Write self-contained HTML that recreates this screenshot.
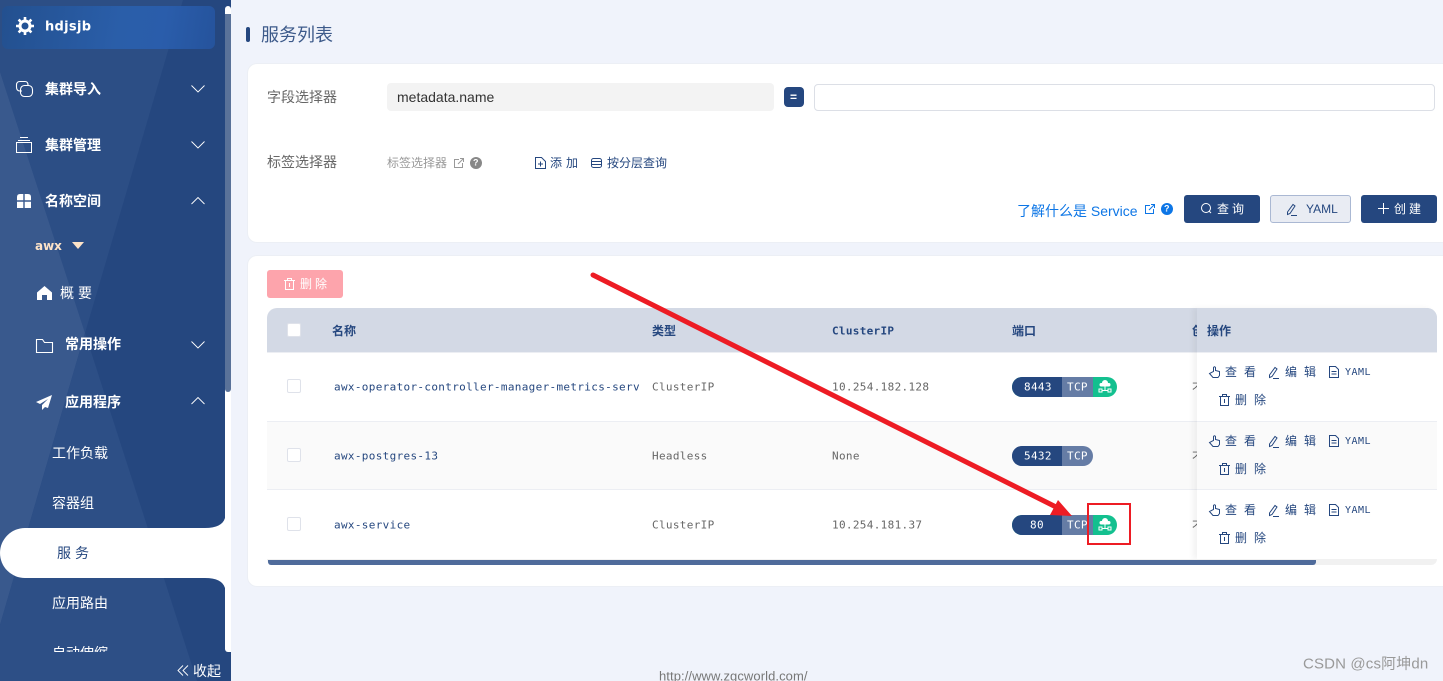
<!DOCTYPE html>
<html lang="zh"><head><meta charset="utf-8"><title>服务列表</title>
<style>
*{box-sizing:border-box}
html,body{margin:0;padding:0;width:1443px;height:681px;overflow:hidden;background:#f0f3fb}
body{position:relative;font-family:"Liberation Sans","WenQuanYi Zen Hei","Noto Sans CJK SC",sans-serif}
.a{position:absolute}
.t{position:absolute;white-space:nowrap;line-height:1;transform:translateY(-50%)}
.m{font-weight:bold;font-size:14px;color:#fff}
.s{font-size:14px;color:#fff}
.mono{font-family:"DejaVu Sans Mono","Liberation Mono",monospace;font-size:11px;letter-spacing:.33px}
.act{font-size:12px;color:#25477f;letter-spacing:7px}
.y{font-family:"DejaVu Sans Mono",monospace;font-size:10px;color:#25477f;letter-spacing:.5px}
.th{font-size:12px;font-weight:bold;color:#25477f}
.btn{position:absolute;top:195px;height:28px;border-radius:3px;background:#25477f}
.cb{position:absolute;left:287px;width:14px;height:14px;background:#fff;border:1px solid #dfe2ea;border-radius:2px}
.chev{fill:none;stroke:#fff;stroke-width:.9}
svg{position:absolute;overflow:visible}
</style></head><body>

<!-- sidebar -->
<div class="a" style="left:0;top:0;width:231px;height:681px;background:#25477f;overflow:hidden">
<svg width="231" height="681" style="left:0;top:0">
<polygon points="0,0 183,0 85,333 0,72" fill="#2c4e85"/>
<polygon points="0,72 85,333 0,625" fill="#39598d"/>
<polygon points="85,333 197,681 0,681 0,625" fill="#2d4f86"/>
</svg>
</div>
<div class="a" style="left:225px;top:6px;width:6px;height:646px;background:#fff;border-radius:3px 3px 0 3px"></div>
<div class="a" style="left:225px;top:14px;width:6px;height:378px;background:#5a7299;border-radius:0 0 3px 3px"></div>

<div class="a" style="left:2px;top:6px;width:213px;height:43px;border-radius:6px;background:linear-gradient(100deg,#23508f 0%,#2a5ea9 55%,#2a5dab 75%,#25539c 100%)"></div>
<svg width="18" height="18" viewBox="0 0 18 18" style="left:16px;top:17px"><circle cx="9" cy="9" r="5" fill="none" stroke="#fff" stroke-width="3"/><g stroke="#fff" stroke-width="2.6"><path d="M9 0v3M9 15v3M0 9h3M15 9h3M2.6 2.6l2 2M13.4 13.4l2 2M15.4 2.6l-2 2M4.6 13.4l-2 2"/></g></svg>
<div class="t" style="left:45px;top:27px;font:bold 13px 'DejaVu Sans',sans-serif;color:#fff;letter-spacing:.3px">hdjsjb</div>

<svg width="17" height="16" viewBox="0 0 17 16" style="left:16px;top:81px" fill="none" stroke="#fff" stroke-width="1.1"><path d="M6 10H4Q.5 10 .5 6V4Q.5.5 4 .5h5Q12 .5 12 4"/><rect x="4.500" y="4.500" width="12" height="11" rx="4"/></svg>
<div class="t m" style="left:45px;top:89px">集群导入</div>
<svg width="14" height="8" class="chev" style="left:191px;top:85px"><path d="M.5 .5l6.500 6.500 6.500-6.500"/></svg>

<svg width="16" height="16" viewBox="0 0 16 16" style="left:16px;top:137px" fill="none" stroke="#fff" stroke-width="1" shape-rendering="crispEdges"><path d="M4 .5h8M2 3.500h12"/><rect x=".5" y="5.500" width="15" height="10"/></svg>
<div class="t m" style="left:45px;top:145px">集群管理</div>
<svg width="14" height="8" class="chev" style="left:191px;top:141px"><path d="M.5 .5l6.500 6.500 6.500-6.500"/></svg>

<svg width="14" height="14" viewBox="0 0 14 14" style="left:17px;top:194px" fill="#fff"><path d="M0 3Q0 0 3 0h3.300v6.300H0zM7.700 0H11q3 0 3 3v3.300H7.700zM0 7.700h6.300V14H0zM7.700 7.700H14V14H7.700z"/></svg>
<div class="t m" style="left:45px;top:201px">名称空间</div>
<svg width="14" height="8" class="chev" style="left:191px;top:197px"><path d="M.5 7l6.500-6.500 6.500 6.500"/></svg>

<div class="t" style="left:35px;top:246px;font:bold 12px 'DejaVu Sans',sans-serif;color:#fde3c8">awx</div>
<svg width="12" height="7" style="left:72px;top:242px"><path d="M0 0h12L6 7z" fill="#fde3c8"/></svg>

<svg width="15" height="14" viewBox="0 0 15 14" style="left:37px;top:286px"><path d="M7.500 0L15 6.500V14H10V9H5V14H0V6.500z" fill="#fff"/></svg>
<div class="t s" style="left:60px;top:293px;letter-spacing:4px">概要</div>

<svg width="17" height="14" viewBox="0 0 17 14" style="left:36px;top:339px" fill="none" stroke="#fff" stroke-width="1.1"><path d="M.5 13.500V.5h6l2 3h8v10z"/></svg>
<div class="t m" style="left:65px;top:344px">常用操作</div>
<svg width="14" height="8" class="chev" style="left:191px;top:341px"><path d="M.5 .5l6.500 6.500 6.500-6.500"/></svg>

<svg width="16" height="15" viewBox="0 0 16 15" style="left:36px;top:395px"><path d="M16 0L0 7l4 2 8-5-6 6v5l3-3 3 1z" fill="#fff"/></svg>
<div class="t m" style="left:65px;top:402px">应用程序</div>
<svg width="14" height="8" class="chev" style="left:191px;top:397px"><path d="M.5 7l6.500-6.500 6.500 6.500"/></svg>

<div class="t s" style="left:52px;top:453px">工作负载</div>
<div class="t s" style="left:52px;top:503px">容器组</div>

<div class="a" style="left:0;top:528px;width:225px;height:50px;background:#fff;border-radius:25px 0 0 25px"></div>
<svg width="20" height="10" style="left:205px;top:518px"><path d="M20 0V10H0Q17 10 20 0z" fill="#fff"/></svg>
<svg width="20" height="10" style="left:205px;top:578px"><path d="M20 10V0H0Q17 0 20 10z" fill="#fff"/></svg>
<div class="t" style="left:57px;top:553px;font-size:14px;color:#25477f;letter-spacing:4px">服务</div>
<div class="t s" style="left:52px;top:603px">应用路由</div>
<div class="a" style="left:52px;top:646px;height:6px;overflow:hidden;font-size:14px;line-height:14px;color:#fff;white-space:nowrap">自动伸缩</div>
<svg width="12" height="11" style="left:177px;top:665px" fill="none" stroke="#fff" stroke-width=".9"><path d="M6 .5L1 5.500l5 5M11 .5L6 5.500l5 5"/></svg>
<div class="t" style="left:193px;top:671px;font-size:14px;color:#fff">收起</div>

<!-- title -->
<div class="a" style="left:246px;top:27px;width:4px;height:15px;background:#25477f;border-radius:2px"></div>
<div class="t" style="left:261px;top:35px;font-size:18px;color:#3d5a8a">服务列表</div>

<!-- filter card -->
<div class="a" style="left:247px;top:63px;width:1196px;height:180px;background:#fff;border-radius:10px 0 0 10px;border:1px solid #eceff5;border-right:0"></div>
<div class="t" style="left:267px;top:97px;font-size:14px;color:#666">字段选择器</div>
<div class="a" style="left:387px;top:83px;width:387px;height:28px;background:#f3f3f3;border-radius:4px"></div>
<div class="t" style="left:397px;top:97px;font-size:14px;color:#333">metadata.name</div>
<div class="a" style="left:784px;top:87px;width:20px;height:20px;background:#25477f;border-radius:4px"></div>
<div class="t" style="left:790px;top:97px;font-size:12px;font-weight:bold;color:#fff">=</div>
<div class="a" style="left:814px;top:84px;width:621px;height:27px;background:#fff;border:1px solid #dcdfe6;border-radius:4px"></div>

<div class="t" style="left:267px;top:162px;font-size:14px;color:#666">标签选择器</div>
<div class="t" style="left:387px;top:163px;font-size:12px;color:#999">标签选择器</div>
<svg width="10" height="10" viewBox="0 0 10 10" style="left:454px;top:158px" fill="none" stroke="#999"><path d="M5 1.500H.5v8h8V5M4 6l5-5M6 .5h3.500V4"/></svg>
<div class="a" style="left:470px;top:157px;width:12px;height:12px;border-radius:50%;background:#888"></div>
<div class="t" style="left:473px;top:163px;font-size:9px;font-weight:bold;color:#fff">?</div>
<svg width="11" height="12" viewBox="0 0 11 12" style="left:535px;top:157px" fill="none" stroke="#25477f"><path d="M.5 .5h6l4 4v7H.5zM3 7h5M5.500 4.500v5"/></svg>
<div class="t" style="left:550px;top:163px;font-size:12px;color:#25477f;letter-spacing:4px">添加</div>
<svg width="11" height="10" viewBox="0 0 11 10" style="left:591px;top:158px" fill="none" stroke="#25477f"><rect x=".5" y=".5" width="10" height="9" rx="2"/><path d="M.5 3.500h10M.5 6.500h10"/></svg>
<div class="t" style="left:607px;top:163px;font-size:12px;color:#25477f">按分层查询</div>

<div class="t" style="left:1017px;top:211px;font-size:14px;color:#0d76e6">了解什么是 Service</div>
<svg width="10" height="10" viewBox="0 0 10 10" style="left:1145px;top:204px" fill="none" stroke="#0d76e6"><path d="M5 1.500H.5v8h8V5M4 6l5-5M6 .5h3.500V4"/></svg>
<div class="a" style="left:1161px;top:203px;width:12px;height:12px;border-radius:50%;background:#0d76e6"></div>
<div class="t" style="left:1164px;top:209px;font-size:9px;font-weight:bold;color:#fff">?</div>

<div class="btn" style="left:1184px;width:76px"></div>
<svg width="11" height="11" style="left:1201px;top:203px" fill="none" stroke="#fff"><circle cx="5" cy="5" r="4.500"/><path d="M8 8l2 2"/></svg>
<div class="t" style="left:1217px;top:209px;font-size:12px;color:#fff;letter-spacing:3px">查询</div>
<div class="btn" style="left:1270px;width:81px;background:#e9ecf3;border:1px solid #aab8d3"></div>
<svg width="12" height="13" viewBox="0 0 12 13" style="left:1286px;top:203px" fill="none" stroke="#25477f"><path d="M1.500 9L7 1.500l2 1.500-5 7.500-2.500 1zM5 12.500h6"/></svg>
<div class="t" style="left:1306px;top:209px;font-size:12px;color:#25477f">YAML</div>
<div class="btn" style="left:1361px;width:76px"></div>
<svg width="11" height="11" style="left:1378px;top:203px" stroke="#fff"><path d="M5.500 0v11M0 5.500h11"/></svg>
<div class="t" style="left:1394px;top:209px;font-size:12px;color:#fff;letter-spacing:3px">创建</div>

<!-- table card -->
<div class="a" style="left:247px;top:255px;width:1196px;height:332px;background:#fff;border-radius:10px 0 0 10px;border:1px solid #eceff5;border-right:0"></div>
<div class="a" style="left:267px;top:270px;width:76px;height:28px;background:#fda4ac;border-radius:3px"></div>
<svg width="11" height="12" viewBox="0 0 11 12" style="left:284px;top:278px" fill="none" stroke="#fff"><path d="M0 2.500h11M3.500 2.500V.5h4v2M1.500 2.500v9h8v-9M5.500 5v4"/></svg>
<div class="t" style="left:300px;top:284px;font-size:12px;color:#fff;letter-spacing:3px">删除</div>

<div class="a" style="left:267px;top:308px;width:1170px;height:44px;background:#d3d9e5;border-radius:10px 10px 0 0"></div>
<div class="a" style="left:267px;top:352px;width:1170px;height:1px;background:#eceef3"></div>
<div class="a" style="left:267px;top:421px;width:1170px;height:69px;background:#fafafa;border-top:1px solid #eceef3;border-bottom:1px solid #eceef3"></div>
<div class="cb" style="top:323px"></div>
<div class="cb" style="top:379px"></div>
<div class="cb" style="top:448px"></div>
<div class="cb" style="top:517px"></div>

<div class="t th" style="left:332px;top:331px">名称</div>
<div class="t th" style="left:652px;top:331px">类型</div>
<div class="t" style="left:832px;top:331px;font:bold 11px 'DejaVu Sans Mono',monospace;color:#25477f;letter-spacing:.3px">ClusterIP</div>
<div class="t th" style="left:1012px;top:331px">端口</div>
<div class="t th" style="left:1192px;top:331px">创</div>

<div class="t mono" style="left:334px;top:387px;color:#25477f">awx-operator-controller-manager-metrics-serv</div>
<div class="t mono" style="left:334px;top:456px;color:#25477f">awx-postgres-13</div>
<div class="t mono" style="left:334px;top:525px;color:#25477f">awx-service</div>
<div class="t mono" style="left:652px;top:387px;color:#666">ClusterIP</div>
<div class="t mono" style="left:652px;top:456px;color:#666">Headless</div>
<div class="t mono" style="left:652px;top:525px;color:#666">ClusterIP</div>
<div class="t mono" style="left:832px;top:387px;color:#666">10.254.182.128</div>
<div class="t mono" style="left:832px;top:456px;color:#666">None</div>
<div class="t mono" style="left:832px;top:525px;color:#666">10.254.181.37</div>
<div class="t" style="left:1192px;top:388px;font-size:12px;color:#666">不</div>
<div class="t" style="left:1192px;top:457px;font-size:12px;color:#666">不</div>
<div class="t" style="left:1192px;top:526px;font-size:12px;color:#666">不</div>

<!-- pills -->
<div class="a" style="left:1012px;top:377px;width:105px;height:20px;border-radius:10px;overflow:hidden;background:#13c08f"><div class="a" style="left:0;top:0;width:50px;height:20px;background:#25477f"></div><div class="a" style="left:50px;top:0;width:31px;height:20px;background:#657ca5"></div></div>
<div class="t mono" style="left:1024px;top:387px;color:#fff">8443</div>
<div class="t mono" style="left:1067px;top:387px;color:#fff">TCP</div>
<svg width="14" height="13" viewBox="0 0 14 13" style="left:1098px;top:380px" fill="#fff"><circle cx="7" cy="3" r="3"/><rect x="1.500" y="3" width="11" height="3.500" rx="1.700"/><path d="M7 6.500v4M4 10.500h6" stroke="#fff" fill="none"/><rect x="1" y="9" width="3" height="3" fill="none" stroke="#fff"/><rect x="10" y="9" width="3" height="3" fill="none" stroke="#fff"/></svg>

<div class="a" style="left:1012px;top:446px;width:81px;height:20px;border-radius:10px;overflow:hidden;background:#657ca5"><div class="a" style="left:0;top:0;width:50px;height:20px;background:#25477f"></div></div>
<div class="t mono" style="left:1024px;top:456px;color:#fff">5432</div>
<div class="t mono" style="left:1067px;top:456px;color:#fff">TCP</div>

<div class="a" style="left:1012px;top:515px;width:105px;height:20px;border-radius:10px;overflow:hidden;background:#13c08f"><div class="a" style="left:0;top:0;width:50px;height:20px;background:#25477f"></div><div class="a" style="left:50px;top:0;width:31px;height:20px;background:#657ca5"></div></div>
<div class="t mono" style="left:1030px;top:525px;color:#fff">80</div>
<div class="t mono" style="left:1067px;top:525px;color:#fff">TCP</div>
<svg width="14" height="13" viewBox="0 0 14 13" style="left:1098px;top:518px" fill="#fff"><circle cx="7" cy="3" r="3"/><rect x="1.500" y="3" width="11" height="3.500" rx="1.700"/><path d="M7 6.500v4M4 10.500h6" stroke="#fff" fill="none"/><rect x="1" y="9" width="3" height="3" fill="none" stroke="#fff"/><rect x="10" y="9" width="3" height="3" fill="none" stroke="#fff"/></svg>

<!-- fixed col -->
<div class="a" style="left:1197px;top:308px;width:240px;height:251px;box-shadow:-4px 0 6px rgba(0,0,0,.05);border-radius:0 10px 0 0"></div>
<div class="a" style="left:1197px;top:308px;width:240px;height:44px;background:#d3d9e5;border-radius:0 10px 0 0"></div>
<div class="a" style="left:1197px;top:353px;width:240px;height:68px;background:#fff"></div>
<div class="a" style="left:1197px;top:422px;width:240px;height:67px;background:#fafafa"></div>
<div class="a" style="left:1197px;top:491px;width:240px;height:68px;background:#fff"></div>
<div class="t th" style="left:1207px;top:331px">操作</div>

<!-- row 1 actions -->
<svg width="12" height="12" viewBox="0 0 12 12" style="left:1209px;top:366px" fill="none" stroke="#25477f"><path d="M4.500 5.500V1.500q1-1.500 2 0v3l4 1v4l-1.500 2H4l-3.500-4z"/></svg>
<div class="t act" style="left:1225px;top:372px">查看</div>
<svg width="12" height="13" viewBox="0 0 12 13" style="left:1268px;top:366px" fill="none" stroke="#25477f"><path d="M1.500 9L7 1.500l2 1.500-5 7.500-2.500 1zM5 12.500h6"/></svg>
<div class="t act" style="left:1285px;top:372px">编辑</div>
<svg width="10" height="12" viewBox="0 0 10 12" style="left:1329px;top:366px" fill="none" stroke="#25477f"><path d="M.5 .5h6l3 3v8H.5zM2.500 5.500h5M2.500 8h5"/></svg>
<div class="t y" style="left:1345px;top:373px">YAML</div>
<svg width="11" height="12" viewBox="0 0 11 12" style="left:1219px;top:394px" fill="none" stroke="#25477f"><path d="M0 2.500h11M3.500 2.500V.5h4v2M1.500 2.500v9h8v-9M5.500 5v4"/></svg>
<div class="t act" style="left:1235px;top:400px">删除</div>

<!-- row 2 actions -->
<svg width="12" height="12" viewBox="0 0 12 12" style="left:1209px;top:435px" fill="none" stroke="#25477f"><path d="M4.500 5.500V1.500q1-1.500 2 0v3l4 1v4l-1.500 2H4l-3.500-4z"/></svg>
<div class="t act" style="left:1225px;top:441px">查看</div>
<svg width="12" height="13" viewBox="0 0 12 13" style="left:1268px;top:435px" fill="none" stroke="#25477f"><path d="M1.500 9L7 1.500l2 1.500-5 7.500-2.500 1zM5 12.500h6"/></svg>
<div class="t act" style="left:1285px;top:441px">编辑</div>
<svg width="10" height="12" viewBox="0 0 10 12" style="left:1329px;top:435px" fill="none" stroke="#25477f"><path d="M.5 .5h6l3 3v8H.5zM2.500 5.500h5M2.500 8h5"/></svg>
<div class="t y" style="left:1345px;top:442px">YAML</div>
<svg width="11" height="12" viewBox="0 0 11 12" style="left:1219px;top:463px" fill="none" stroke="#25477f"><path d="M0 2.500h11M3.500 2.500V.5h4v2M1.500 2.500v9h8v-9M5.500 5v4"/></svg>
<div class="t act" style="left:1235px;top:469px">删除</div>

<!-- row 3 actions -->
<svg width="12" height="12" viewBox="0 0 12 12" style="left:1209px;top:504px" fill="none" stroke="#25477f"><path d="M4.500 5.500V1.500q1-1.500 2 0v3l4 1v4l-1.500 2H4l-3.500-4z"/></svg>
<div class="t act" style="left:1225px;top:510px">查看</div>
<svg width="12" height="13" viewBox="0 0 12 13" style="left:1268px;top:504px" fill="none" stroke="#25477f"><path d="M1.500 9L7 1.500l2 1.500-5 7.500-2.500 1zM5 12.500h6"/></svg>
<div class="t act" style="left:1285px;top:510px">编辑</div>
<svg width="10" height="12" viewBox="0 0 10 12" style="left:1329px;top:504px" fill="none" stroke="#25477f"><path d="M.5 .5h6l3 3v8H.5zM2.500 5.500h5M2.500 8h5"/></svg>
<div class="t y" style="left:1345px;top:511px">YAML</div>
<svg width="11" height="12" viewBox="0 0 11 12" style="left:1219px;top:532px" fill="none" stroke="#25477f"><path d="M0 2.500h11M3.500 2.500V.5h4v2M1.500 2.500v9h8v-9M5.500 5v4"/></svg>
<div class="t act" style="left:1235px;top:538px">删除</div>

<!-- h scrollbar -->
<div class="a" style="left:267px;top:559px;width:1170px;height:6px;background:#f1f1f1;border-radius:0 0 6px 6px"></div>
<div class="a" style="left:268px;top:560px;width:1048px;height:5px;background:#4f6b9b;border-radius:0 0 3px 3px"></div>

<!-- annotation -->
<svg width="1443" height="681" style="left:0;top:0;pointer-events:none">
<line x1="593" y1="275" x2="1062" y2="510" stroke="#ed1c24" stroke-width="5" stroke-linecap="round"/>
<polygon points="1058,500 1072,516 1050,515" fill="#ed1c24"/>
<rect x="1088" y="504" width="42" height="40" fill="none" stroke="#ed1c24" stroke-width="2"/>
</svg>

<div class="t" style="left:659px;top:676px;font-size:13px;letter-spacing:.08px;color:#777">http://www.zgcworld.com/</div>
<div class="t" style="left:1303px;top:664px;font-size:15px;letter-spacing:.15px;color:#999">CSDN @cs阿坤dn</div>
</body></html>
